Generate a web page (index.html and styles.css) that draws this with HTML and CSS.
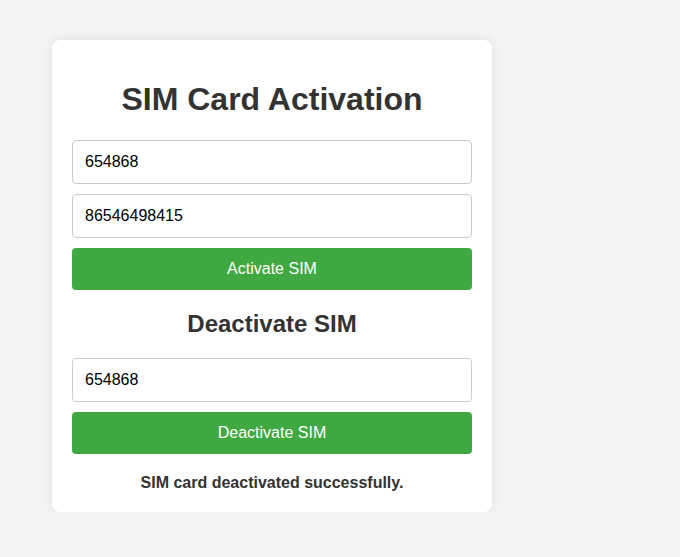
FILE: index.html
```html
<!DOCTYPE html>
<html>
<head>
<meta charset="utf-8">
<link rel="stylesheet" href="styles.css">
</head>
<body>
<div class="card">
  <h1 class="title">SIM Card Activation</h1>
  <input class="field" type="text" value="654868">
  <input class="field" type="text" value="86546498415">
  <button class="btn">Activate SIM</button>
  <h2 class="subtitle">Deactivate SIM</h2>
  <input class="field" type="text" value="654868">
  <button class="btn">Deactivate SIM</button>
  <p class="message">SIM card deactivated successfully.</p>
</div>
</body>
</html>
```
FILE: styles.css
```css
html, body {
  margin: 0;
  background: #f4f4f4;
  font-family: "Liberation Sans", Arial, sans-serif;
}
body {
  padding: 40px 0 0 52px;
}
.card {
  width: 400px;
  padding: 20px;
  background: #fff;
  border-radius: 8px;
  box-shadow: 0 0 10px rgba(0, 0, 0, 0.1);
  text-align: center;
}
.title {
  font-size: 32px;
  font-weight: bold;
  color: #333;
  margin: 21.44px 0;
}
.subtitle {
  font-size: 24px;
  font-weight: bold;
  color: #333;
  margin: 19.92px 0;
}
.field {
  display: block;
  box-sizing: border-box;
  width: 100%;
  height: 44px;
  padding: 12px;
  margin: 0 0 10px;
  border: 1px solid #ccc;
  border-radius: 4px;
  font-family: "Liberation Sans", Arial, sans-serif;
  font-size: 16px;
  color: #000;
  background: #fff;
}
.btn {
  display: block;
  width: 100%;
  height: 42px;
  padding: 0;
  margin: 0 0 10px;
  border: none;
  border-radius: 4px;
  background: #40a840;
  color: #fff;
  font-family: "Liberation Sans", Arial, sans-serif;
  font-size: 16px;
}
.message {
  margin: 20px 0 0;
  font-size: 16px;
  font-weight: bold;
  color: #333;
}
```
